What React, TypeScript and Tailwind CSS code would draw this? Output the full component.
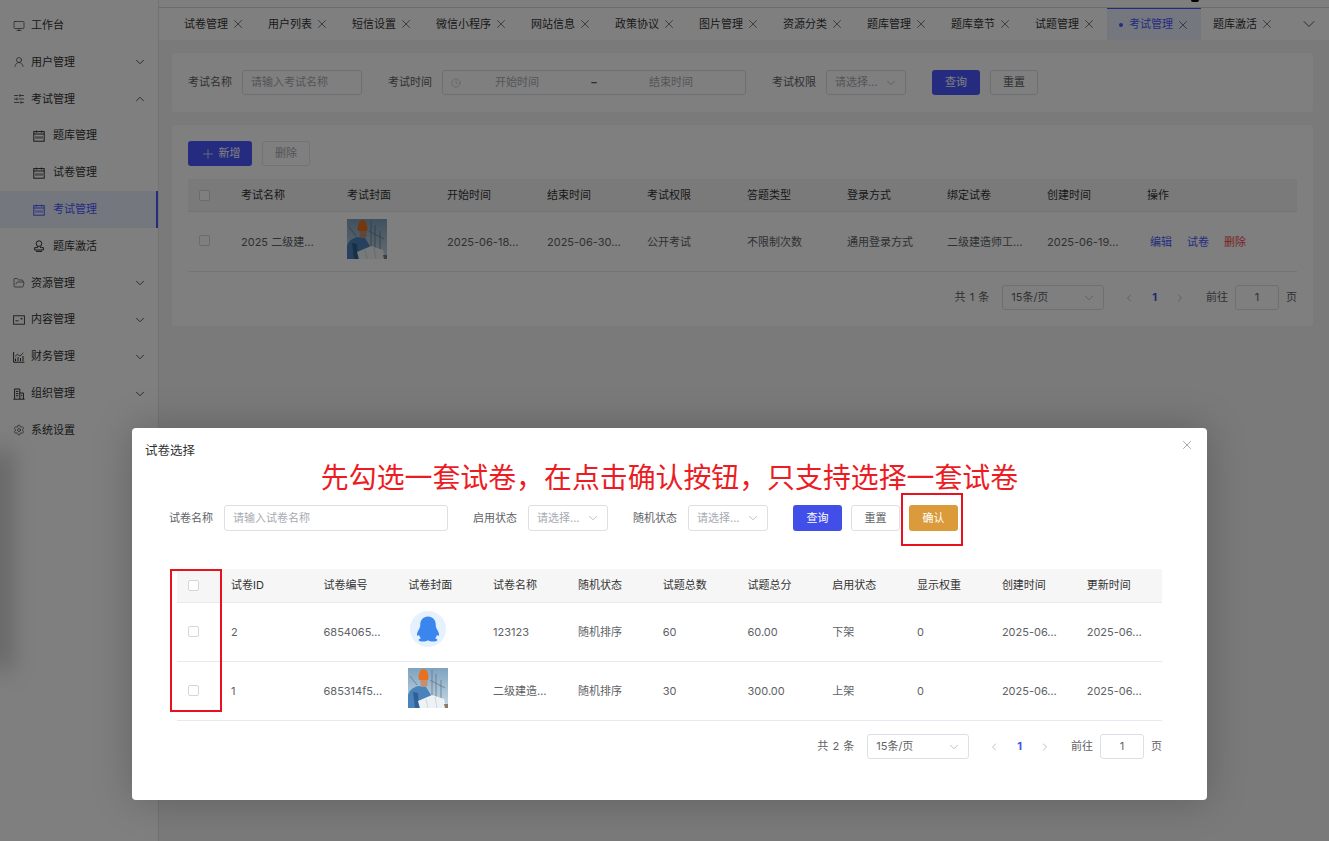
import { ChevronDown, ChevronLeft, ChevronRight, ChevronUp, Clock, FolderOpen, Monitor, Plus, Settings, SlidersHorizontal, UserRound, X } from "lucide-react";
import type { ReactNode } from "react";

function CalIcon({ className = "" }: { className?: string }) {
  return (
    <svg viewBox="0 0 12 12" className={`w-3 h-3 ${className}`} fill="none" stroke="currentColor" strokeWidth="1">
      <rect x="0.8" y="1.6" width="10.4" height="9.6" />
      <path d="M0.8 4h10.4M3.5 0.6v2M8.5 0.6v2" />
      <path d="M3 6.2v2.6M5 6.2v2.6M7 6.2v2.6M9 6.2v2.6" strokeWidth="0.9" />
    </svg>
  );
}

function StampIcon() {
  return (
    <svg viewBox="0 0 12 12" className="w-3 h-3" fill="none" stroke="currentColor" strokeWidth="1">
      <circle cx="6" cy="3.6" r="2.8" />
      <path d="M4.6 6.2v1.4H1.6v2.4h8.8V7.6H7.4V6.2M3 11.4h6" />
    </svg>
  );
}

function CardIcon() {
  return (
    <svg viewBox="0 0 12 12" className="w-3 h-3" fill="none" stroke="currentColor" strokeWidth="0.9">
      <rect x="0.6" y="1.8" width="10.8" height="8.4" />
      <path d="M2.4 6.8h3.2" />
      <rect x="7.6" y="4" width="1.8" height="1.4" fill="currentColor" stroke="none" />
    </svg>
  );
}

function ChartIcon() {
  return (
    <svg viewBox="0 0 12 12" className="w-3 h-3" fill="none" stroke="currentColor" strokeWidth="1">
      <path d="M0.6 1v10.2h10.8" />
      <path d="M2.5 10V7.5M5 10V6M7.5 10V7M10 10V5" />
      <path d="M2 5.4 4.4 3.4 7 5 10.4 1.8" strokeWidth="0.8" />
    </svg>
  );
}

function BuildingIcon() {
  return (
    <svg viewBox="0 0 12 12" className="w-3 h-3" fill="none" stroke="currentColor" strokeWidth="1">
      <path d="M0.4 11.2h11.2M1.6 11V1h5.2v10M6.800 5h3.6v6" />
      <path d="M3 3.4h2.4M3 5.6h2.4M3 7.8h2.4M8 7.4h1.2" />
    </svg>
  );
}

// worker photo used as a cover
function Photo() {
  return (
    <svg viewBox="0 0 40 40" className="w-10 h-10 block">
      <defs>
        <linearGradient id="sky" x1="0" y1="0" x2="0" y2="1">
          <stop offset="0" stopColor="#7ea3bf" />
          <stop offset="1" stopColor="#c9d9e6" />
        </linearGradient>
      </defs>
      <rect width="40" height="40" fill="url(#sky)" />
      <path d="M24 2v30M28 6v26M33 12v20M2 8l7 9M22 12l15 8" stroke="#66788c" strokeWidth="0.8" fill="none" />
      <path d="M0 40V27c1-5 6-8 10-9l8 1 5 8-2 13Z" fill="#4a83bb" />
      <path d="M5 24l2 16h4l-1-15Z" fill="#2f6193" />
      <rect x="12.5" y="9" width="7" height="10" rx="3" fill="#c48f73" />
      <path d="M10.500 11c0-6 2-10 5-10s5 4 5 10l-1 1h-8Z" fill="#e8701f" />
      <path d="M10 33l14-6 12 4 2 9H12Z" fill="#eef2f5" />
      <path d="M18 31l2 9M27 29l2 11" stroke="#b9c6d2" strokeWidth="0.6" />
      <path d="M36 36h4v4h-3Z" fill="#8b7a63" />
    </svg>
  );
}

function QQAvatar() {
  return (
    <div className="w-9 h-9 rounded-full bg-[#e6f1ff] flex items-center justify-center">
      <svg viewBox="0 0 24 24" className="w-[30px] h-[30px]" fill="#3b86ee">
        <path d="M12 2c-4 0-6.200 3-6.200 6.600 0 1.600-.5 2.800-1.300 4.200-.9 1.600-1.500 3-1.300 4.200.1.700.8.500 1.600-.2.300 1 .8 1.800 1.500 2.500-1 .4-1.800.9-1.800 1.500 0 1 2 1.200 3.600 1.200 1.500 0 2.800-.3 3.400-.9h1c.6.600 1.900.9 3.400.9 1.600 0 3.600-.2 3.600-1.200 0-.6-.8-1.100-1.800-1.500.7-.7 1.200-1.500 1.500-2.500.8.700 1.500.9 1.600.2.200-1.200-.4-2.600-1.300-4.200-.8-1.400-1.300-2.600-1.300-4.200C18.200 5 16 2 12 2Z" />
      </svg>
    </div>
  );
}

function Checkbox() {
  return <span className="block w-[11px] h-[11px] border border-[#d4d6dc] rounded-[2px] bg-white" />;
}

function Field({ children, className = "", dark }: { children: ReactNode; className?: string; dark?: boolean }) {
  return (
    <div className={`flex items-center border border-[#dcdfe6] rounded-[3px] bg-white px-[8px] ${dark ? "text-[#606266]" : "text-[#a8abb2]"} ${className}`}>
      {children}
    </div>
  );
}

function SelectBox({ className = "" }: { className?: string }) {
  return (
    <Field className={`justify-between ${className}`}>
      <span>请选择…</span>
      <ChevronDown className="w-[14px] h-[14px] -mr-px text-[#909399]" strokeWidth={1} />
    </Field>
  );
}

function Pagination({ total }: { total: number }) {
  return (
    <div className="flex items-center justify-end text-[#606266]">
      <span className="mr-[13px] [word-spacing:1px]">共 {total} 条</span>
      <Field dark className="w-[102px] h-[25px] justify-between">
        <span>15条/页</span>
        <ChevronDown className="w-[14px] h-[14px] -mr-px text-[#909399]" strokeWidth={1} />
      </Field>
      <ChevronLeft className="w-3 h-3 ml-[19px] text-[#909399]" strokeWidth={1.2} />
      <span className="ml-[17px] font-bold text-[#3f51ee]">1</span>
      <ChevronRight className="w-3 h-3 ml-[17px] text-[#909399]" strokeWidth={1.2} />
      <span className="ml-[20px]">前往</span>
      <Field dark className="w-11 h-[25px] ml-[7px] justify-center">1</Field>
      <span className="ml-[7px]">页</span>
    </div>
  );
}

const tabs = ["试卷管理", "用户列表", "短信设置", "微信小程序", "网站信息", "政策协议", "图片管理", "资源分类", "题库管理", "题库章节", "试题管理"];

const mainHead = ["考试封面", "开始时间", "结束时间", "考试权限", "答题类型", "登录方式", "绑定试卷", "创建时间", "操作"];
const mainRow = ["", "2025-06-18…", "2025-06-30…", "公开考试", "不限制次数", "通用登录方式", "二级建造师工…", "2025-06-19…"];

const dialogHead = ["试卷编号", "试卷封面", "试卷名称", "随机状态", "试题总数", "试题总分", "启用状态", "显示权重", "创建时间", "更新时间"];
const dialogRows = [
  { id: "2", no: "6854065…", cover: <div className="pl-[2px]"><QQAvatar /></div>, cells: ["123123", "随机排序", "60", "60.00", "下架", "0", "2025-06…", "2025-06…"] },
  { id: "1", no: "685314f5…", cover: <Photo />, cells: ["二级建造…", "随机排序", "30", "300.00", "上架", "0", "2025-06…", "2025-06…"] },
];

function TabClose({ className = "" }: { className?: string }) {
  return <X className={`w-[14px] h-[14px] ml-[3px] -mr-px ${className}`} strokeWidth={1.1} />;
}

function NavRow({ icon, label, chevron }: { icon: ReactNode; label: string; chevron?: "up" | "down" }) {
  return (
    <div className="h-[36.8px] flex items-center pl-[13px] pr-[11px] text-[#333]">
      {icon}
      <span className="ml-[6px] flex-1">{label}</span>
      {chevron === "down" && <ChevronDown className="w-[14px] h-[14px]" strokeWidth={1.4} />}
      {chevron === "up" && <ChevronUp className="w-[14px] h-[14px]" strokeWidth={1.4} />}
    </div>
  );
}

function SubRow({ icon, label, active }: { icon: ReactNode; label: string; active?: boolean }) {
  return (
    <div className={`h-[36.8px] flex items-center pl-[33px] ${active ? "bg-[#ebeeff] border-r-2 border-[#4a58ff] text-[#4a58ff]" : "text-[#333]"}`}>
      {icon}
      <span className="ml-[8px]">{label}</span>
    </div>
  );
}

export default function App() {
  const iconCls = "w-3 h-3";
  return (
    <div className="relative w-[1329px] h-[841px] overflow-hidden flex bg-[#f4f4f4] text-[11px] leading-none" style={{ fontFamily: 'Inter, "Noto Sans CJK SC", sans-serif' }}>
      {/* sidebar */}
      <aside className="w-[159px] shrink-0 bg-white border-r border-[#e4e4e4] pt-[7.2px]">
        <NavRow icon={<Monitor className={iconCls} strokeWidth={1.3} />} label="工作台" />
        <NavRow icon={<UserRound className={iconCls} strokeWidth={1.3} />} label="用户管理" chevron="down" />
        <NavRow icon={<SlidersHorizontal className={iconCls} strokeWidth={1.5} />} label="考试管理" chevron="up" />
        <SubRow icon={<CalIcon />} label="题库管理" />
        <SubRow icon={<CalIcon />} label="试卷管理" />
        <SubRow icon={<CalIcon />} label="考试管理" active />
        <SubRow icon={<StampIcon />} label="题库激活" />
        <NavRow icon={<FolderOpen className={iconCls} strokeWidth={1.3} />} label="资源管理" chevron="down" />
        <NavRow icon={<CardIcon />} label="内容管理" chevron="down" />
        <NavRow icon={<ChartIcon />} label="财务管理" chevron="down" />
        <NavRow icon={<BuildingIcon />} label="组织管理" chevron="down" />
        <NavRow icon={<Settings className={iconCls} strokeWidth={1.3} />} label="系统设置" />
      </aside>

      {/* main */}
      <main className="flex-1 min-w-0 flex flex-col">
        <div className="h-2 bg-white border-b border-[#d8d8d8] flex justify-end pr-[130px] overflow-hidden shrink-0">
          <span className="block w-[8px] h-[2px] bg-black rounded-b-full" />
        </div>
        <div className="h-[32px] bg-white flex items-stretch pl-[13px] shrink-0 text-[#333]">
          {tabs.map((t) => (
            <div key={t} className="flex items-center px-3 shrink-0">
              <span>{t}</span>
              <TabClose />
            </div>
          ))}
          <div className="flex items-center px-3 shrink-0 bg-[#ebeeff] border-t border-[#4a58ff] text-[#4a58ff]">
            <span className="w-1 h-1 rounded-full bg-[#4a58ff] mr-[6px]" />
            <span>考试管理</span>
            <TabClose className="text-[#333]" />
          </div>
          <div className="flex items-center px-3 shrink-0">
            <span>题库激活</span>
            <TabClose />
          </div>
          <ChevronDown className="w-5 h-5 shrink-0 self-center ml-[14px]" strokeWidth={1} />
        </div>

        <div className="flex-1 pt-[13px] pl-[13px] pr-4">
          {/* search */}
          <div className="h-[59px] bg-white rounded-[3px] flex items-center pl-4 text-[#606266]">
            <span>考试名称</span>
            <Field className="w-[120px] h-[25px] ml-[10px]">请输入考试名称</Field>
            <span className="ml-[26px]">考试时间</span>
            <Field className="w-[304px] h-[25px] ml-[10px]">
              <Clock className="w-[10px] h-[10px] shrink-0" strokeWidth={1.2} />
              <span className="w-[112px] text-center">开始时间</span>
              <span className="w-[42px] text-center font-bold text-[#606266]">–</span>
              <span className="w-[112px] text-center">结束时间</span>
            </Field>
            <span className="ml-[26px]">考试权限</span>
            <SelectBox className="w-[80px] h-[25px] ml-[10px]" />
            <button className="w-12 h-[25px] ml-[26px] rounded-[3px] bg-[#4a58ff] text-white">查询</button>
            <button className="w-12 h-[25px] ml-[10px] rounded-[3px] border border-[#dcdfe6] bg-white">重置</button>
          </div>

          {/* table card */}
          <div className="mt-[13px] h-[201px] bg-white rounded-[3px] px-4 pt-4">
            <div className="flex items-center gap-[10px]">
              <button className="w-16 h-[25px] rounded-[3px] bg-[#4a58ff] text-white flex items-center justify-center gap-[3px]">
                <Plus className="w-4 h-4" strokeWidth={1} />
                新增
              </button>
              <button className="w-12 h-[25px] rounded-[3px] border border-[#e4e7ed] bg-white text-[#a8abb2]">删除</button>
            </div>
            <div className="mt-[13px] h-[33px] bg-[#f5f5f5] border-b border-[#e8e8e8] flex items-center text-[#333]">
              <div className="w-[53px] pl-[11px]"><Checkbox /></div>
              <div className="w-[106px]">考试名称</div>
              {mainHead.map((h) => (
                <div key={h} className="w-[100px]">{h}</div>
              ))}
            </div>
            <div className="h-[60px] pt-[2px] border-b border-[#e8e8e8] flex items-center text-[#606266]">
              <div className="w-[53px] pl-[11px] -mt-[4px]"><Checkbox /></div>
              <div className="w-[106px]">2025 二级建…</div>
              {mainRow.map((c, i) => (
                <div key={i} className={`w-[100px] ${i === 0 ? "-mt-[8px]" : ""}`}>{i === 0 ? <Photo /> : c}</div>
              ))}
              <div className="flex gap-[15px] pl-[3px]">
                <span className="text-[#4a58ff]">编辑</span>
                <span className="text-[#4a58ff]">试卷</span>
                <span className="text-[#f04848]">删除</span>
              </div>
            </div>
            <div className="mt-[13px]"><Pagination total={1} /></div>
          </div>
        </div>
      </main>

      {/* mask */}
      <div className="absolute inset-0 bg-black/50" />
      <div className="absolute -left-[10px] top-[450px] w-5 h-[220px] bg-black/25 blur-md" />

      {/* dialog */}
      <div className="absolute left-[132px] top-[428px] w-[1075px] h-[372px] bg-white rounded-[4px] shadow-[0_0_40px_rgba(0,0,0,0.22)]">
        <div className="absolute left-[13px] top-[17px] text-[12.5px] text-[#333]">试卷选择</div>
        <X className="absolute right-[13px] top-[10px] w-[14px] h-[14px] text-[#777]" strokeWidth={1.1} />
        <div className="pt-[36px] text-center text-[27.9px] leading-[28px] text-[#ec1c24]">
          先勾选一套试卷，在点击确认按钮，只支持选择一套试卷
        </div>

        <div className="mt-[13px] pl-[37px] flex items-center text-[#606266]">
          <span>试卷名称</span>
          <Field className="w-[224px] h-[26px] ml-[11px]">请输入试卷名称</Field>
          <span className="ml-[25px]">启用状态</span>
          <SelectBox className="w-[80px] h-[26px] ml-[11px]" />
          <span className="ml-[25px]">随机状态</span>
          <SelectBox className="w-[80px] h-[26px] ml-[11px]" />
          <button className="w-[49px] h-[26px] ml-[25px] rounded-[3px] bg-[#414ee8] text-white">查询</button>
          <button className="w-[49px] h-[26px] ml-[9px] rounded-[3px] border border-[#dcdfe6] bg-white">重置</button>
          <button className="w-[49px] h-[26px] ml-[9px] rounded-[3px] bg-[#db9b3b] text-white">确认</button>
        </div>

        <div className="mt-[38px] mx-[45px]">
          <div className="h-[34px] bg-[#f6f6f6] border-b border-[#e8e8ee] flex items-center text-[#333]">
            <div className="w-[54px] shrink-0 pl-[11px]"><Checkbox /></div>
            <div className="w-[92.5px] shrink-0">试卷ID</div>
            {dialogHead.map((h) => (
              <div key={h} className="w-[84.8px] shrink-0 last:w-auto last:flex-1">{h}</div>
            ))}
          </div>
          {dialogRows.map((r) => (
            <div key={r.id} className="h-[59px] border-b border-[#e8e8ee] flex items-center text-[#606266]">
              <div className="w-[54px] shrink-0 pl-[11px] -mt-[2px]"><Checkbox /></div>
              <div className="w-[92.5px] shrink-0">{r.id}</div>
              <div className="w-[84.8px] shrink-0">{r.no}</div>
              <div className="w-[84.8px] shrink-0 -mt-[6px]">{r.cover}</div>
              {r.cells.map((c, i) => (
                <div key={i} className="w-[84.8px] shrink-0 last:w-auto last:flex-1">{c}</div>
              ))}
            </div>
          ))}
          <div className="mt-[13px]"><Pagination total={2} /></div>
        </div>

        {/* red annotation boxes */}
        <div className="absolute left-[38px] top-[141px] w-[52px] h-[143px] border-2 border-[#e8111e]" />
        <div className="absolute left-[769px] top-[65px] w-[62px] h-[53px] border-2 border-[#e8111e]" />
      </div>
    </div>
  );
}
